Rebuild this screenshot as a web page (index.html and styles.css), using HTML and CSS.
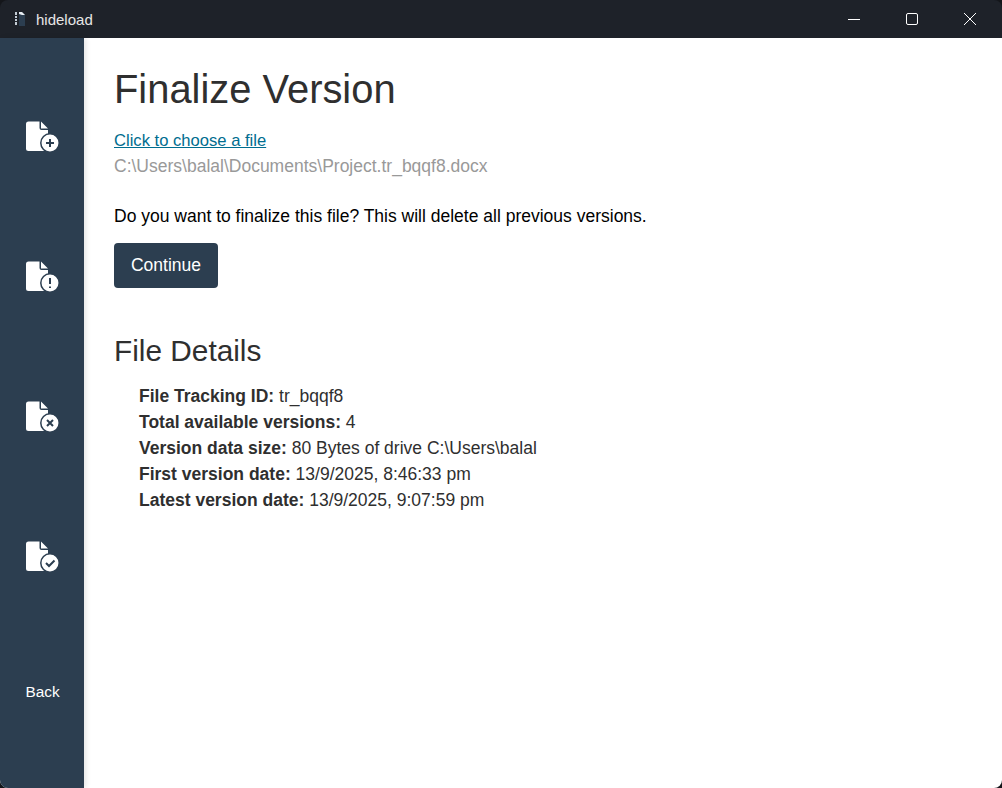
FILE: index.html
```html
<!DOCTYPE html>
<html lang="en">

<head>
    <meta charset="UTF-8">
    <title>hideload</title>
    <link rel="stylesheet" href="styles.css">
</head>

<body>
    <div class="window">
        <header class="titlebar">
            <div class="app-title">
                <svg class="app-icon" viewBox="0 0 12 16" width="12" height="16">
                    <path d="M5 1h3l3 3v11H5z" fill="#2c3e50" />
                    <path d="M5 1h3l3 3H8L5 3z" fill="#e8edf2" />
                    <path d="M1 1h2v3H1zM1 5h2v2H1zM1 8h2v2H1zM1 11h2v3H1z" fill="#c3ccd5" />
                </svg>
                <span>hideload</span>
            </div>
            <div class="window-controls">
                <button class="control" aria-label="Minimize">
                    <svg viewBox="0 0 12 12" width="12" height="12"><path d="M0 6.5h12" stroke="#fff" fill="none" /></svg>
                </button>
                <button class="control" aria-label="Maximize">
                    <svg viewBox="0 0 12 12" width="12" height="12"><rect x="0.5" y="0.5" width="11" height="11" rx="1.5" stroke="#fff" fill="none" /></svg>
                </button>
                <button class="control" aria-label="Close">
                    <svg viewBox="0 0 12 12" width="12" height="12"><path d="M0 0l12 12M12 0L0 12" stroke="#fff" fill="none" /></svg>
                </button>
            </div>
        </header>

        <div class="app-body">
            <nav class="sidebar">
                <a class="nav-item" href="#" aria-label="Create">
                    <svg class="nav-icon" viewBox="0 0 34 32" width="34" height="32">
                        <path class="doc" d="M3.5 1.500h11v6.500a2 2 0 0 0 2 2h6.500V31H3.500a2.500 2.500 0 0 1-2.500-2.500V4a2.500 2.500 0 0 1 2.500-2.500zM16 1.500l7 7h-7z" />
                        <circle class="badge" cx="25" cy="23" r="9.200" />
                        <path class="mark" d="M25 19v8M21 23h8" />
                    </svg>
                </a>
                <a class="nav-item" href="#" aria-label="Status">
                    <svg class="nav-icon" viewBox="0 0 34 32" width="34" height="32">
                        <path class="doc" d="M3.5 1.500h11v6.500a2 2 0 0 0 2 2h6.500V31H3.500a2.500 2.500 0 0 1-2.500-2.500V4a2.500 2.500 0 0 1 2.500-2.500zM16 1.500l7 7h-7z" />
                        <circle class="badge" cx="25" cy="23" r="9.200" />
                        <path class="mark" d="M25 18v6M25 26.500V28" />
                    </svg>
                </a>
                <a class="nav-item" href="#" aria-label="Delete">
                    <svg class="nav-icon" viewBox="0 0 34 32" width="34" height="32">
                        <path class="doc" d="M3.5 1.500h11v6.500a2 2 0 0 0 2 2h6.500V31H3.500a2.500 2.500 0 0 1-2.500-2.500V4a2.500 2.500 0 0 1 2.500-2.500zM16 1.500l7 7h-7z" />
                        <circle class="badge" cx="25" cy="23" r="9.200" />
                        <path class="mark" d="M22 20l6 6M28 20l-6 6" />
                    </svg>
                </a>
                <a class="nav-item" href="#" aria-label="Finalize">
                    <svg class="nav-icon" viewBox="0 0 34 32" width="34" height="32">
                        <path class="doc" d="M3.5 1.500h11v6.500a2 2 0 0 0 2 2h6.500V31H3.500a2.500 2.500 0 0 1-2.500-2.500V4a2.500 2.500 0 0 1 2.500-2.500zM16 1.500l7 7h-7z" />
                        <circle class="badge" cx="25" cy="23" r="9.200" />
                        <path class="mark" d="M21 23l3 3 5.500-5.500" />
                    </svg>
                </a>
                <a class="nav-item back" href="#">Back</a>
            </nav>

            <main class="content">
                <h1>Finalize Version</h1>
                <a class="file-link" href="#">Click to choose a file</a>
                <p class="file-path">C:\Users\balal\Documents\Project.tr_bqqf8.docx</p>
                <p class="question">Do you want to finalize this file? This will delete all previous versions.</p>
                <button class="primary">Continue</button>

                <h2>File Details</h2>
                <ul class="details">
                    <li><b>File Tracking ID:</b> tr_bqqf8</li>
                    <li><b>Total available versions:</b> 4</li>
                    <li><b>Version data size:</b> 80 Bytes of drive C:\Users\balal</li>
                    <li><b>First version date:</b> 13/9/2025, 8:46:33 pm</li>
                    <li><b>Latest version date:</b> 13/9/2025, 9:07:59 pm</li>
                </ul>
            </main>
        </div>
    </div>
</body>

</html>
```
FILE: styles.css
```css
html,
body {
    height: 100%;
}

body {
    margin: 0;
    background-color: #14161a;
    font-family: "Liberation Sans", Arial, sans-serif;
    color: #2f2f2f;
}

.window {
    display: flex;
    flex-direction: column;
    height: 100%;
    overflow: hidden;
    border-radius: 8px;
}

.titlebar {
    display: flex;
    justify-content: space-between;
    align-items: center;
    height: 38px;
    flex-shrink: 0;
    background-color: #1e2229;
    color: #e6e6e6;
    font-size: 15px;
}

.app-title {
    display: flex;
    align-items: center;
    gap: 10px;
    padding-left: 14px;
}

.window-controls {
    display: flex;
    padding-right: 3px;
}

.control {
    display: flex;
    justify-content: center;
    align-items: center;
    width: 58px;
    height: 38px;
    padding: 0;
    border: none;
    background: none;
}

.app-body {
    display: flex;
    flex: 1;
    min-height: 0;
    background-color: white;
}

.sidebar {
    display: flex;
    flex-direction: column;
    width: 84px;
    flex-shrink: 0;
    padding-top: 28px;
    background-color: #2c3e50;
    box-shadow: 2px 0 5px rgba(0, 0, 0, 0.1);
    box-sizing: border-box;
}

.nav-item {
    display: flex;
    justify-content: center;
    align-items: center;
    height: 140px;
    color: white;
    text-decoration: none;
    font-size: 15.4px;
}

.nav-item.back {
    height: 132px;
    padding-left: 1px;
}

.doc {
    fill: white;
    fill-rule: evenodd;
}

.badge {
    fill: white;
    stroke: #2c3e50;
    stroke-width: 1.5;
}

.mark {
    fill: none;
    stroke: #2c3e50;
    stroke-width: 2;
}

.content {
    flex: 1;
    padding: 0 30px;
}

h1 {
    margin: 27px 0 15px;
    font-size: 39.9px;
    font-weight: 400;
    line-height: 48px;
}

.file-link {
    display: block;
    color: #006d8f;
    font-size: 16.6px;
    line-height: 25px;
}

.file-path {
    margin: 0 0 24px;
    color: #999;
    font-size: 17.5px;
    line-height: 26px;
}

.question {
    margin: 0 0 14px;
    color: black;
    font-size: 17.5px;
    line-height: 26px;
}

.primary {
    display: block;
    width: 104px;
    height: 45px;
    padding: 0;
    border: none;
    border-radius: 4px;
    background-color: #2c3e50;
    color: white;
    font-family: inherit;
    font-size: 17.5px;
}

h2 {
    margin: 45px 0 14px;
    font-size: 29.8px;
    font-weight: 400;
    line-height: 36px;
}

.details {
    margin: 0;
    padding: 0 0 0 25px;
    list-style: none;
    font-size: 17.5px;
    line-height: 26px;
}
```
